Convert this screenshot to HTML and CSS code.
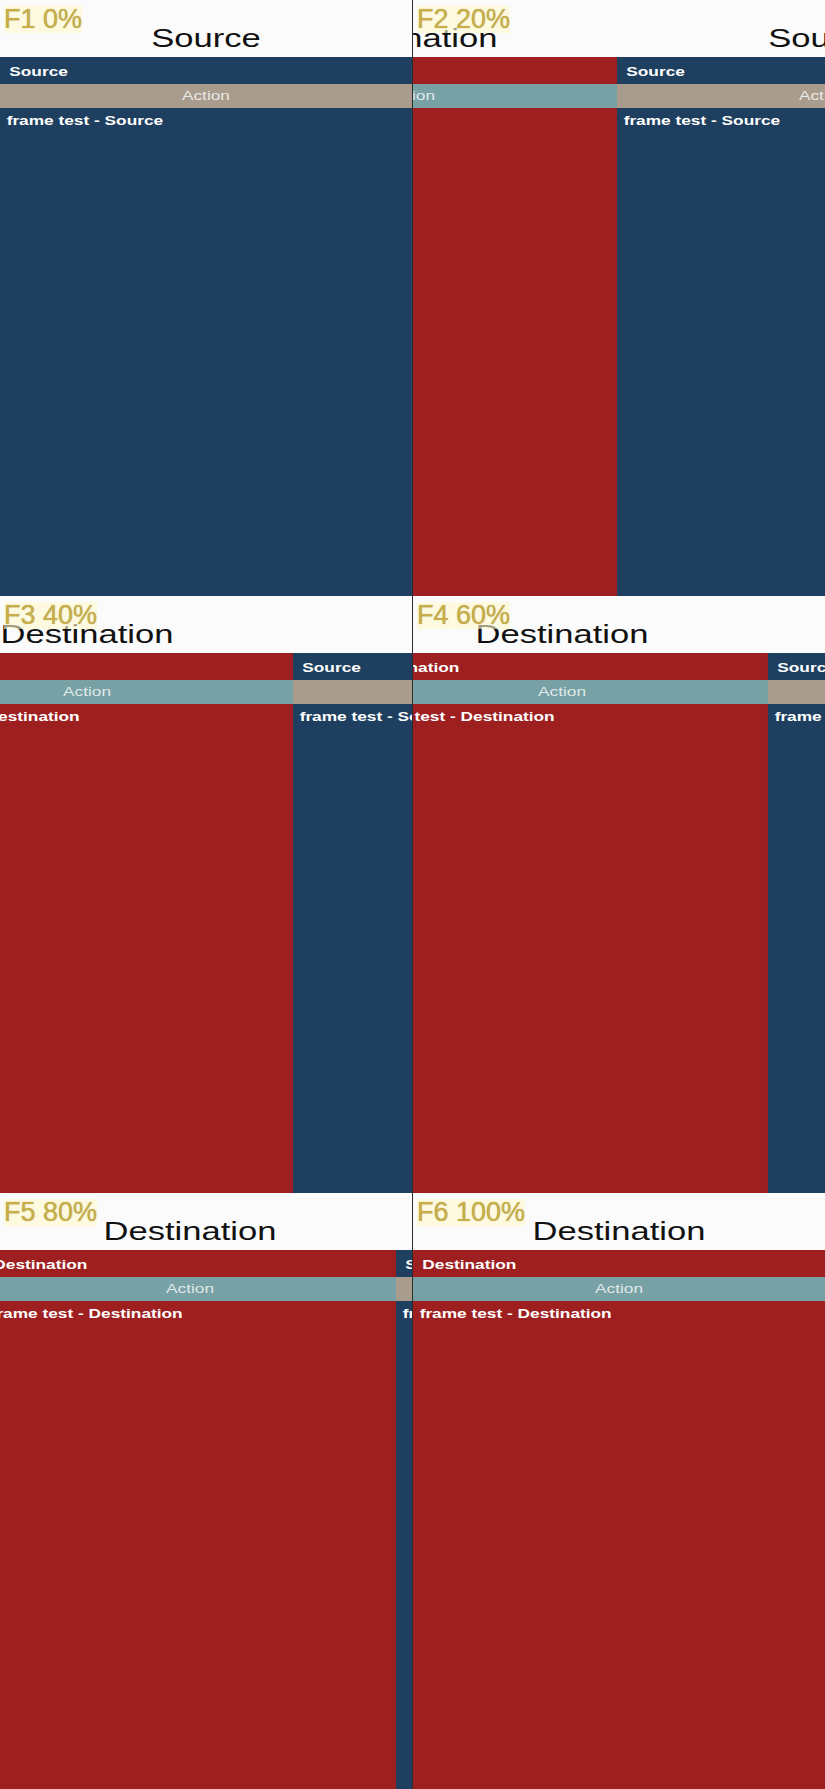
FILE: index.html
```html
<!DOCTYPE html>
<html>
<head>
<meta charset="utf-8">
<title>frame test</title>
<link rel="stylesheet" href="styles.css">
</head>
<body>
<div class="frames">
	<!-- F1 -->
	<div class="frame">
		<span class="label">F1 0%</span>
		<div class="track" style="--shift:0px">
			<div class="page dest">
				<div class="header">Destination</div>
				<div class="toolbar">Destination</div>
				<div class="action">Action</div>
				<div class="content">frame test - Destination</div>
			</div>
			<div class="page source">
				<div class="header">Source</div>
				<div class="toolbar">Source</div>
				<div class="action">Action</div>
				<div class="content">frame test - Source</div>
			</div>
		</div>
	</div>
	<!-- F2 -->
	<div class="frame">
		<span class="label">F2 20%</span>
		<div class="track" style="--shift:204px">
			<div class="page dest">
				<div class="header">Destination</div>
				<div class="toolbar">Destination</div>
				<div class="action">Action</div>
				<div class="content">frame test - Destination</div>
			</div>
			<div class="page source">
				<div class="header">Source</div>
				<div class="toolbar">Source</div>
				<div class="action">Action</div>
				<div class="content">frame test - Source</div>
			</div>
		</div>
	</div>
	<!-- F3 -->
	<div class="frame">
		<span class="label">F3 40%</span>
		<div class="track" style="--shift:293px">
			<div class="page dest">
				<div class="header">Destination</div>
				<div class="toolbar">Destination</div>
				<div class="action">Action</div>
				<div class="content">frame test - Destination</div>
			</div>
			<div class="page source">
				<div class="header">Source</div>
				<div class="toolbar">Source</div>
				<div class="action">Action</div>
				<div class="content">frame test - Source</div>
			</div>
		</div>
	</div>
	<!-- F4 -->
	<div class="frame">
		<span class="label">F4 60%</span>
		<div class="track" style="--shift:355px">
			<div class="page dest">
				<div class="header">Destination</div>
				<div class="toolbar">Destination</div>
				<div class="action">Action</div>
				<div class="content">frame test - Destination</div>
			</div>
			<div class="page source">
				<div class="header">Source</div>
				<div class="toolbar">Source</div>
				<div class="action">Action</div>
				<div class="content">frame test - Source</div>
			</div>
		</div>
	</div>
	<!-- F5 -->
	<div class="frame">
		<span class="label">F5 80%</span>
		<div class="track" style="--shift:396px">
			<div class="page dest">
				<div class="header">Destination</div>
				<div class="toolbar">Destination</div>
				<div class="action">Action</div>
				<div class="content">frame test - Destination</div>
			</div>
			<div class="page source">
				<div class="header">Source</div>
				<div class="toolbar">Source</div>
				<div class="action">Action</div>
				<div class="content">frame test - Source</div>
			</div>
		</div>
	</div>
	<!-- F6 -->
	<div class="frame">
		<span class="label">F6 100%</span>
		<div class="track" style="--shift:412px">
			<div class="page dest">
				<div class="header">Destination</div>
				<div class="toolbar">Destination</div>
				<div class="action">Action</div>
				<div class="content">frame test - Destination</div>
			</div>
			<div class="page source">
				<div class="header">Source</div>
				<div class="toolbar">Source</div>
				<div class="action">Action</div>
				<div class="content">frame test - Source</div>
			</div>
		</div>
	</div>
</div>
</body>
</html>
```
FILE: styles.css
```css
body{
	margin:0;
	background:#2b2b2b;
	font-family:"Liberation Sans",Arial,sans-serif;
}
.frames{
	display:grid;
	grid-template-columns:412px 412px;
	grid-template-rows:596px 597px 596px;
	column-gap:1px;
}
.frame{
	position:relative;
	overflow:hidden;
	background:#fbfbfb;
}
/* two pages side by side, pages are drawn 310 wide and stretched to the frame */
.track{
	display:flex;
	width:620px;
	height:100%;
	transform-origin:0 0;
	transform:translateX(calc(var(--shift) - 412px)) scaleX(1.329);
}
.page{
	width:310px;
	flex:none;
	display:flex;
	flex-direction:column;
}
.source .toolbar,.source .content{
	background:#1e3f5f;
}
.dest .toolbar,.dest .content{
	background:#9d1f20;
}
.header{
	height:57px;
	box-sizing:border-box;
	padding-top:24px;
	text-align:center;
	font-size:26px;
	line-height:29px;
	color:#111;
	white-space:nowrap;
}
.toolbar{
	height:27px;
	box-sizing:border-box;
	padding:7px 0 0 7px;
	font-size:13px;
	line-height:15px;
	font-weight:bold;
	color:#fff;
	white-space:nowrap;
}
.action{
	height:24px;
	box-sizing:border-box;
	padding-top:4px;
	text-align:center;
	font-size:13px;
	line-height:15px;
	color:rgba(255,255,255,.78);
}
.source .action{
	background:#a99c8c;
}
.dest .action{
	background:#77a1a4;
}
.content{
	flex:1;
	padding:5px 0 0 5px;
	font-size:13px;
	line-height:15px;
	font-weight:bold;
	color:#fff;
	white-space:nowrap;
}
.label{
	position:absolute;
	top:6px;
	left:4px;
	z-index:1;
	font-size:27px;
	line-height:27px;
	color:#c9ae47;
	background:rgba(255,250,205,.6);
	text-shadow:0 0 1px rgba(90,75,10,.5);
}
```
